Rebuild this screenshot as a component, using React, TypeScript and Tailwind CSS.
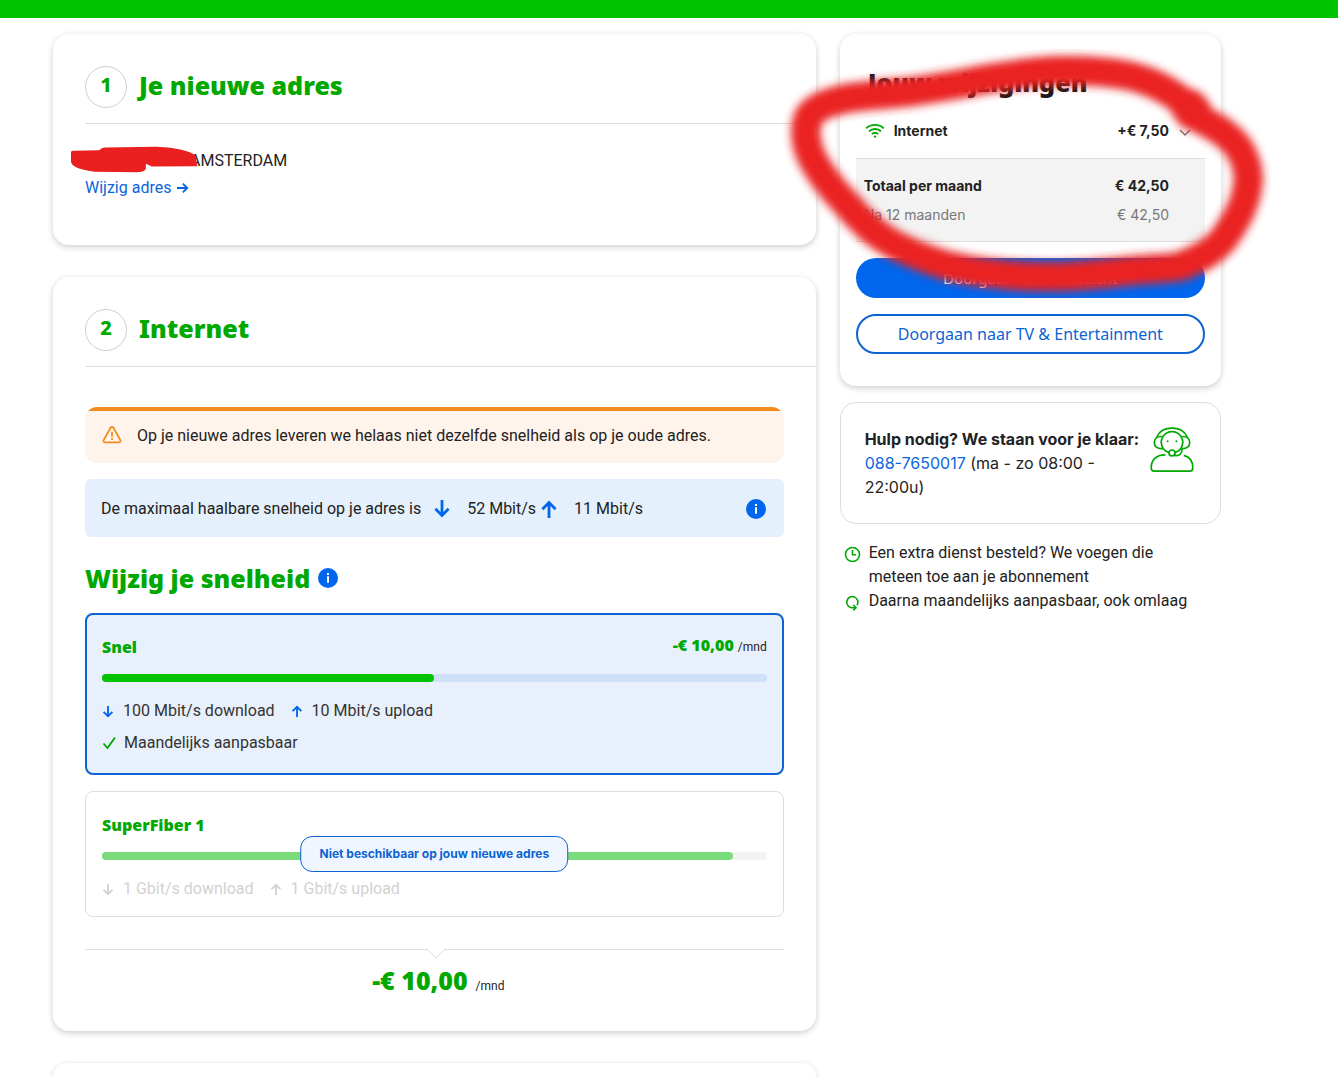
import type { ReactNode } from 'react';
import clsx from 'clsx';

function ArrowIcon({ dir = 'down', className = '' }: { dir?: 'down' | 'up' | 'right'; className?: string }) {
  return (
    <svg
      viewBox="0 0 18 18"
      fill="none"
      stroke="currentColor"
      strokeWidth="2.8"
      className={clsx('shrink-0', dir === 'up' && 'rotate-180', dir === 'right' && '-rotate-90', className)}
    >
      <path d="M9 0v15M2.4 8.8 9 15.4l6.6-6.6" />
    </svg>
  );
}

function InfoButton({ label }: { label: string }) {
  return (
    <button aria-label={label} className="w-5 h-5 rounded-full bg-[#0066ee] text-white shrink-0 flex items-center justify-center">
      <svg viewBox="0 0 20 20" className="w-5 h-5" fill="currentColor">
        <rect x="9" y="5" width="2" height="2" />
        <path d="M9 8.3h2v6.5H9z" />
      </svg>
    </button>
  );
}

function WifiIcon() {
  return (
    <svg viewBox="0 0 20 16" className="w-5 h-4 shrink-0 text-[#00a800]" fill="none" stroke="currentColor" strokeWidth="1.8">
      <path d="M1.2 5.4C6 .8 14 .8 18.8 5.4M4 8.4c3.4-3.2 8.6-3.2 12 0M6.8 11.2c1.9-1.7 4.5-1.7 6.4 0" />
      <circle cx="10" cy="13.6" r="1.2" fill="currentColor" stroke="none" />
    </svg>
  );
}

function AgentIcon() {
  return (
    <svg viewBox="0 0 44 46" className="w-11 h-[46px] shrink-0 text-[#00a800]" fill="none" stroke="currentColor" strokeWidth="1.7" strokeLinejoin="round">
      <path d="M6.8 9.800C9.5 4.2 15 1.2 22 1.2s12.5 3 15.2 8.6" />
      <path d="M19 25.5a10.7 10.7 0 1 1 6 0" />
      <path d="M11.8 9.6C7 9 4.3 11.7 4.3 15.4s2.7 6.7 8.3 6.2" />
      <path d="M32.2 9.6c4.8-.6 7.5 2.1 7.5 5.8s-2.7 6.7-8.3 6.2" />
      <circle cx="17.6" cy="14.2" r="1" fill="currentColor" stroke="none" />
      <circle cx="26.4" cy="14.2" r="1" fill="currentColor" stroke="none" />
      <circle cx="22" cy="26" r="3" />
      <path d="M24.5 28.4c5 1 7.5-1.4 7.5-6.6" />
      <path d="M15.5 27.8C6 27.4 1.2 33.5 1.2 40.8c0 2.2 1 3.4 3 3.4h35.6c2 0 3-1.2 3-3.4 0-6.3-3.4-11-9-12.4" />
    </svg>
  );
}

function StepHeader({ step, title }: { step: number; title: string }) {
  return (
    <div className="flex items-start gap-3 pb-[15px] border-b border-[#dedede]">
      <span className="w-[42px] h-[42px] rounded-full border border-[#cfcfcf] flex items-center justify-center pb-1 font-['Noto_Sans'] font-extrabold text-xl text-[#00a800]">
        {step}
      </span>
      <h2 className="font-['Noto_Sans'] font-black text-[25px] leading-[38px] text-[#00a800]">{title}</h2>
    </div>
  );
}

function Card({ children, className }: { children?: ReactNode; className?: string }) {
  return (
    <section className={clsx('bg-white shadow-[0_2px_6px_rgba(0,0,0,0.2)]', className)}>{children}</section>
  );
}

type Plan = {
  name: string;
  fill: number;
  down: string;
  up: string;
  price?: string;
  flexible?: boolean;
  unavailable?: string;
};

const plans: Plan[] = [
  { name: 'Snel', fill: 50, down: '100 Mbit/s', up: '10 Mbit/s', price: '-€ 10,00', flexible: true },
  { name: 'SuperFiber 1', fill: 95, down: '1 Gbit/s', up: '1 Gbit/s', unavailable: 'Niet beschikbaar op jouw nieuwe adres' },
];

function PlanCard({ plan }: { plan: Plan }) {
  const off = !!plan.unavailable;
  return (
    <label
      className={clsx(
        'relative block rounded-lg',
        off ? 'border border-[#dedede] px-4 pt-[21px] pb-[15px]' : 'border-2 border-[#0c63d2] bg-[#e7f0fb] px-[15px] pt-5 pb-[18px] cursor-pointer'
      )}
    >
      <input type="radio" name="plan" className="sr-only" defaultChecked={!off} disabled={off} />
      <span className="flex justify-between items-center h-6">
        <span className="font-['Noto_Sans'] font-black text-base leading-6 text-[#00a800]">{plan.name}</span>
        {plan.price && (
          <span className="flex items-baseline gap-1 pb-1">
            <span className="font-['Noto_Sans'] font-black text-base leading-6 text-[#00a800]">{plan.price}</span>
            <span className="text-xs">/mnd</span>
          </span>
        )}
      </span>

      {/* Speed bar */}
      <span className={clsx('block h-2 mt-[15px] rounded-full', off ? 'bg-[#f3f3f3]' : 'bg-[#cfe1fa]')}>
        <span
          className={clsx('block h-2 rounded-full', off ? 'bg-[#7bdc7b]' : 'bg-[#00c300]')}
          style={{ width: `${plan.fill}%` }}
        />
      </span>

      <span className={clsx('flex items-center mt-[17px] leading-6', off ? 'text-[#d2d2d2]' : 'text-[#333]')}>
        <ArrowIcon className={clsx('w-3 h-3 mt-0.5 mr-[9px]', !off && 'text-[#0066ee]')} />
        {plan.down} download
        <ArrowIcon dir="up" className={clsx('w-3 h-3 ml-4 mr-[9px]', !off && 'text-[#0066ee]')} />
        {plan.up} upload
      </span>
      {plan.flexible && (
        <span className="flex items-center gap-2 mt-2 leading-6 text-[#333]">
          <svg viewBox="0 0 14 14" className="w-3.5 h-3.5 text-[#00a800]" fill="none" stroke="currentColor" strokeWidth="1.8">
            <path d="M1.5 7.5 5.5 12 13 1.5" />
          </svg>
          Maandelijks aanpasbaar
        </span>
      )}

      {off && (
        <span className="absolute left-1/2 top-11 -translate-x-1/2 rounded-xl border border-[#0c63d2] bg-[#f0f6ff] px-[18px] py-2 font-['Inter'] text-xs leading-[18px] font-bold text-[#0c63d2] whitespace-nowrap">
          {plan.unavailable}
        </span>
      )}
    </label>
  );
}

function AddressCard() {
  return (
    <Card className="rounded-2xl pt-8 pl-8 pb-[45px]">
      <StepHeader step={1} title="Je nieuwe adres" />
      <div className="relative mt-[25px] leading-6">
        <p className="pl-[105px]">AMSTERDAM</p>
        {/* Redacted street and postcode */}
        <svg viewBox="90 378 384 80" className="absolute -left-[15px] -top-[3px] w-32 h-[27px]" aria-hidden="true">
          <path
            d="M93 396 Q94 391 100 392 L178 390 Q184 382 195 382 L350 380 C410 382 450 394 466 405 L472 438 L335 439 L318 431 L317 447 Q312 456 290 456 L165 455 C120 449 95 440 93 425Z"
            fill="#ea2020"
          />
        </svg>
      </div>
      <a href="#adres" className="mt-[3px] inline-flex items-center gap-1.5 leading-6 text-[#0a66dd]">
        Wijzig adres
        <ArrowIcon dir="right" className="w-3 h-3" />
      </a>
    </Card>
  );
}

function InternetCard() {
  return (
    <Card className="rounded-2xl pt-8 pl-8 pb-[33px]">
      <StepHeader step={2} title="Internet" />
      <div className="pr-8 pt-10">
        <div className="overflow-hidden rounded-xl bg-[#fff4eb]">
          <div className="h-1 bg-[#f28c1e]" />
          <div className="flex items-center gap-3.5 px-4 pt-[13px] pb-[15px] leading-6">
            <svg viewBox="0 0 22 20" className="w-[22px] h-5 text-[#f28c1e]" fill="none" stroke="currentColor" strokeWidth="1.8" strokeLinejoin="round">
              <path d="M9.6 1.8a1.6 1.6 0 0 1 2.8 0l7 12.4a1.4 1.4 0 0 1-1.2 2.1H3.8a1.4 1.4 0 0 1-1.2-2.1z" />
              <path d="M11 5.8v5M11 12.1v1.8" />
            </svg>
            <p>Op je nieuwe adres leveren we helaas niet dezelfde snelheid als op je oude adres.</p>
          </div>
        </div>

        <div className="mt-4 flex items-center rounded-md bg-[#e4f0fb] px-4 pt-[18px] pb-4 leading-6">
          <p className="flex flex-1 items-center">
            De maximaal haalbare snelheid op je adres is
            <ArrowIcon className="w-[18px] h-[18px] ml-3 mr-4 text-[#0066ee]" />
            52 Mbit/s
            <ArrowIcon dir="up" className="w-[18px] h-[18px] ml-1 mr-4 text-[#0066ee]" />
            11 Mbit/s
          </p>
          <span className="pr-0.5"><InfoButton label="Uitleg snelheid" /></span>
        </div>

        <div className="flex items-center gap-2 mt-[22px]">
          <h2 className="font-['Noto_Sans'] font-black text-[25px] leading-[38px] text-[#00a800]">Wijzig je snelheid</h2>
          <InfoButton label="Uitleg wijzigen" />
        </div>

        <div className="mt-4 flex flex-col gap-4">
          {plans.map(p => <PlanCard key={p.name} plan={p} />)}
        </div>

        <div className="relative mt-8 border-t border-[#dedede] pt-3 flex justify-center items-baseline gap-2">
          <svg viewBox="0 0 20 11" className="absolute -top-px left-1/2 -ml-2 w-5 h-[11px]">
            <path d="M1 0 10 9 19 0" fill="#fff" stroke="#dedede" />
            <path d="M2 0h16" stroke="#fff" strokeWidth="2" />
          </svg>
          <span className="pl-2 font-['Noto_Sans'] font-black text-[25px] leading-9 text-[#00a800]">-€ 10,00</span>
          <span className="text-xs">/mnd</span>
        </div>
      </div>
    </Card>
  );
}

function Summary() {
  return (
    <Card className="relative rounded-2xl px-4 pt-[30px] pb-8 font-['Inter']">
      <h2 className="pl-3 font-['Noto_Sans'] font-black text-[25px] leading-9 text-[#1a1a1a]">Jouw wijzigingen</h2>
      <button className="mt-5 flex w-full items-center pl-[9px] pr-3.5 text-sm leading-[22px] font-bold">
        <WifiIcon />
        <span className="ml-[9px] flex-1 text-left">Internet</span>
        <span>+€ 7,50</span>
        <svg viewBox="0 0 12 8" className="ml-2.5 mt-1 w-3 h-2 text-[#777]" fill="none" stroke="currentColor" strokeWidth="1.5">
          <path d="M1 1l5 5 5-5" />
        </svg>
      </button>
      <dl className="mt-4 border-y border-[#dedede] bg-[#f3f3f3] pl-2 pr-9 pt-4 pb-[15px] text-sm leading-[22px]">
        <div className="flex justify-between font-bold">
          <dt>Totaal per maand</dt>
          <dd>€ 42,50</dd>
        </div>
        <div className="mt-[7px] flex justify-between text-[#777]">
          <dt>Na 12 maanden</dt>
          <dd>€ 42,50</dd>
        </div>
      </dl>
      <button className="mt-4 h-10 w-full rounded-full bg-[#0066ee] font-['Noto_Sans'] text-[15px] text-white">
        Doorgaan naar overzicht
      </button>
      <button className="mt-4 h-10 w-full rounded-full border-2 border-[#0c63d2] font-['Noto_Sans'] text-base text-[#0c63d2]">
        Doorgaan naar TV &amp; Entertainment
      </button>

      {/* Marker circle drawn over the totals */}
      <svg viewBox="0 0 1500 900" className="pointer-events-none absolute -left-[60px] -top-3.5 w-[500px] h-[300px] max-w-none z-10" aria-hidden="true">
        <defs>
          <filter id="soft" x="-10%" y="-10%" width="120%" height="120%">
            <feGaussianBlur stdDeviation="12" />
          </filter>
        </defs>
        <g filter="url(#soft)" fill="none" stroke="#ea2020" strokeLinecap="round" strokeLinejoin="round">
          <path
            strokeWidth="88"
            d="M1236 270C1190 222 1120 184 1050 168C980 153 900 150 820 152C740 156 670 168 600 180C530 195 470 204 400 214C330 222 270 226 220 232C160 242 110 258 90 285C70 315 74 370 97 415C117 455 160 510 200 552C240 600 280 638 330 667C380 695 440 718 500 736C600 761 710 771 830 770C910 768 980 760 1050 752C1100 746 1160 746 1200 739C1260 715 1300 695 1332 655C1370 600 1400 550 1405 480C1406 430 1380 380 1350 355C1320 325 1280 308 1236 285"
          />
          <path strokeWidth="110" d="M1228 262l12 14" />
        </g>
      </svg>
    </Card>
  );
}

export default function App() {
  return (
    <div className="min-h-screen bg-white font-['Roboto',sans-serif] text-base text-[#222]">
      <header className="h-[18px] bg-[#00c300]" />
      <main className="grid grid-cols-[2fr_1fr] gap-6 pt-4 pl-[53px] pr-[117px]">
        <div className="flex min-w-0 flex-col gap-8">
          <AddressCard />
          <InternetCard />
          <Card className="h-3.5 rounded-t-2xl" />
        </div>

        <aside className="min-w-0">
          <Summary />
          <div className="mt-4 flex items-start justify-between rounded-2xl border border-[#dedede] py-6 pl-6 pr-[26px] font-['Inter'] leading-6">
            <p>
              <strong className="whitespace-nowrap">Hulp nodig? We staan voor je klaar:</strong>
              <br />
              <a href="tel:0887650017" className="text-[#0a66dd]">088-7650017</a> (ma - zo 08:00 -<br />22:00u)
            </p>
            <AgentIcon />
          </div>
          <ul className="mt-[17px] pl-1 pr-8 leading-6">
            <li className="flex gap-2">
              <svg viewBox="0 0 17 17" className="mt-[5px] w-[17px] h-[17px] shrink-0 text-[#00a800]" fill="none" stroke="currentColor" strokeWidth="1.6">
                <circle cx="8.5" cy="8.5" r="7" />
                <path d="M8.5 4v4.8H12" />
              </svg>
              Een extra dienst besteld? We voegen die meteen toe aan je abonnement
            </li>
            <li className="flex gap-2 whitespace-nowrap">
              <svg viewBox="0 0 17 17" className="mt-[5px] w-[17px] h-[17px] shrink-0 text-[#00a800]" fill="none" stroke="currentColor" strokeWidth="1.6">
                <path d="M13 11.3A5.6 5.6 0 1 0 7.5 13.7h4M9.3 11l2.7 2.7-2.7 2.7" />
              </svg>
              Daarna maandelijks aanpasbaar, ook omlaag
            </li>
          </ul>
        </aside>
      </main>
    </div>
  );
}
